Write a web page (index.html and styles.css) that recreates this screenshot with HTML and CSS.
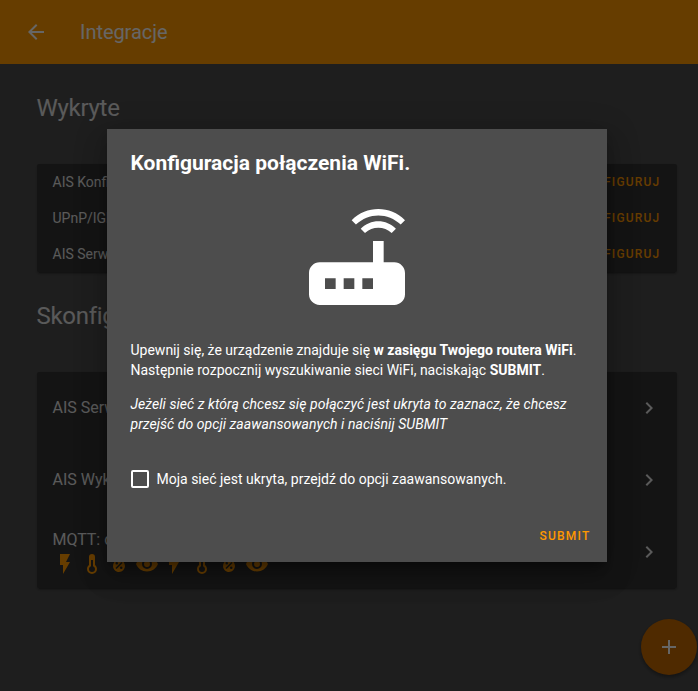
FILE: index.html
```html
<!DOCTYPE html>
<html lang="pl">
<head>
<meta charset="utf-8">
<title>Integracje</title>
<link rel="stylesheet" href="styles.css">
</head>
<body>
<svg class="defs" width="0" height="0">
  <symbol id="flash" viewBox="0 0 24 24"><path d="M7,2V13H10V22L17,10H13L17,2H7Z"/></symbol>
  <symbol id="thermometer" viewBox="0 0 24 24"><path d="M17,17A5,5 0 0,1 12,22A5,5 0 0,1 7,17C7,15.36 7.79,13.91 9,13V5A3,3 0 0,1 12,2A3,3 0 0,1 15,5V13C16.21,13.91 17,15.36 17,17M11,8V14.17C9.83,14.58 9,15.69 9,17A3,3 0 0,0 12,20A3,3 0 0,0 15,17C15,15.69 14.17,14.58 13,14.17V8H11Z"/></symbol>
  <symbol id="humidity" viewBox="0 0 24 24"><path d="M12,3.25C12,3.25 6,10 6,14C6,17.32 8.69,20 12,20A6,6 0 0,0 18,14C18,10 12,3.25 12,3.25M14.47,9.97L15.53,11.03L9.53,17.03L8.47,15.97M9.75,10A1.25,1.25 0 0,1 11,11.25A1.25,1.25 0 0,1 9.75,12.5A1.25,1.25 0 0,1 8.5,11.25A1.25,1.25 0 0,1 9.75,10M14.25,14.5A1.25,1.25 0 0,1 15.5,15.75A1.25,1.25 0 0,1 14.25,17A1.25,1.25 0 0,1 13,15.75A1.25,1.25 0 0,1 14.25,14.5Z"/></symbol>
  <symbol id="eye" viewBox="0 0 24 24"><path d="M12,9A3,3 0 0,0 9,12A3,3 0 0,0 12,15A3,3 0 0,0 15,12A3,3 0 0,0 12,9M12,17A5,5 0 0,1 7,12A5,5 0 0,1 12,7A5,5 0 0,1 17,12A5,5 0 0,1 12,17M12,4.5C7,4.5 2.73,7.61 1,12C2.73,16.39 7,19.5 12,19.5C17,19.5 21.27,16.39 23,12C21.27,7.61 17,4.5 12,4.5Z"/></symbol>
  <symbol id="chevron" viewBox="0 0 24 24"><path d="M10 6L8.59 7.41 13.17 12l-4.58 4.59L10 18l6-6z"/></symbol>
</svg>

<header class="toolbar">
  <svg class="icon" viewBox="0 0 24 24"><path d="M20 11H7.83l5.59-5.59L12 4l-8 8 8 8 1.41-1.41L7.83 13H20v-2z"/></svg>
  <span class="toolbar-title">Integracje</span>
</header>

<main class="content">
  <h2 class="heading">Wykryte</h2>
  <section class="card">
    <div class="found"><span>AIS Konfiguracja WiFi</span><span class="action">KONFIGURUJ</span></div>
    <div class="found"><span>UPnP/IGD</span><span class="action">KONFIGURUJ</span></div>
    <div class="found"><span>AIS Serwis</span><span class="action">KONFIGURUJ</span></div>
  </section>
  <h2 class="heading">Skonfigurowane</h2>
  <section class="card">
    <div class="entry"><div>AIS Serwis</div><svg class="icon"><use href="#chevron"/></svg></div>
    <div class="entry"><div>AIS Wykrywanie</div><svg class="icon"><use href="#chevron"/></svg></div>
    <div class="entry">
      <div>
        <div class="entry-name">MQTT: configuration.yaml</div>
        <div class="entities">
          <svg class="icon"><use href="#flash"/></svg>
          <svg class="icon"><use href="#thermometer"/></svg>
          <svg class="icon"><use href="#humidity"/></svg>
          <svg class="icon"><use href="#eye"/></svg>
          <svg class="icon"><use href="#flash"/></svg>
          <svg class="icon"><use href="#thermometer"/></svg>
          <svg class="icon"><use href="#humidity"/></svg>
          <svg class="icon"><use href="#eye"/></svg>
        </div>
      </div>
      <svg class="icon"><use href="#chevron"/></svg>
    </div>
  </section>
</main>

<div class="fab"><svg class="icon" viewBox="0 0 24 24"><path d="M19 13h-6v6h-2v-6H5v-2h6V5h2v6h6v2z"/></svg></div>

<div class="backdrop">
  <div class="dialog">
    <h1 class="dialog-title">Konfiguracja połączenia WiFi.</h1>
    <svg class="router" viewBox="0 0 24 24"><path d="M20.2 5.9l.8-.8C19.6 3.7 17.8 3 16 3s-3.6.7-5 2.1l.8.8C13 4.8 14.5 4.2 16 4.2s3 .6 4.2 1.7zm-.9.8c-.9-.9-2.1-1.4-3.3-1.4s-2.4.5-3.3 1.4l.8.8c.7-.7 1.6-1 2.5-1 .9 0 1.8.3 2.5 1l.8-.8zM19 13h-2V9h-2v4H5c-1.1 0-2 .9-2 2v4c0 1.1.9 2 2 2h14c1.1 0 2-.9 2-2v-4c0-1.1-.9-2-2-2zM8 18H6v-2h2v2zm3.5 0h-2v-2h2v2zm3.5 0h-2v-2h2v2z"/></svg>
    <p class="text">Upewnij się, że urządzenie znajduje się <b>w zasięgu Twojego routera WiFi</b>.<br>Następnie rozpocznij wyszukiwanie sieci WiFi, naciskając <b>SUBMIT</b>.</p>
    <p class="text"><em>Jeżeli sieć z którą chcesz się połączyć jest ukryta to zaznacz, że chcesz<br>przejść do opcji zaawansowanych i naciśnij SUBMIT</em></p>
    <div class="check"><span class="box"></span><span>Moja sieć jest ukryta, przejdź do opcji zaawansowanych.</span></div>
    <div class="buttons"><span class="action">SUBMIT</span></div>
  </div>
</div>
</body>
</html>
```
FILE: styles.css
```css
* { box-sizing: border-box; }
body {
  margin: 0;
  height: 691px;
  overflow: hidden;
  background: #4d4d4d;
  color: #e1e1e1;
  font: 14px/20px Roboto, "Noto Sans", sans-serif;
}
.defs { position: absolute; }
.icon { width: 24px; height: 24px; fill: currentColor; flex: none; }
.toolbar {
  display: flex;
  align-items: center;
  gap: 32px;
  height: 64px;
  padding: 0 24px;
  background: #ff9800;
  color: #fff;
}
.toolbar-title { font-size: 20px; letter-spacing: -.05px; }
.content { width: 640px; margin-left: 36.5px; }
.heading {
  margin: 0;
  height: 100px;
  padding-top: 28px;
  font-size: 24px;
  font-weight: 400;
  line-height: 32px;
  letter-spacing: -.012em;
  white-space: nowrap;
}
.card {
  background: #323232;
  border-radius: 2px;
  box-shadow: 0 2px 2px rgba(0,0,0,.14), 0 1px 5px rgba(0,0,0,.12), 0 3px 1px -2px rgba(0,0,0,.2);
}
.found {
  display: flex;
  justify-content: space-between;
  align-items: center;
  height: 36px;
  padding: 0 16px;
}
.action {
  color: #ff9800;
  font-size: 12px;
  font-weight: 500;
  letter-spacing: 1.2px;
}
.entry {
  display: flex;
  justify-content: space-between;
  align-items: center;
  height: 72px;
  padding: 0 16px;
  font-size: 16px;
}
.entry-name { line-height: 24px; }
.entities { display: flex; gap: 3.47px; color: #ff9800; }
.fab {
  position: absolute;
  left: 641px;
  top: 619px;
  width: 56px;
  height: 56px;
  display: grid;
  place-items: center;
  border-radius: 50%;
  background: #c66900;
  color: #fff;
  box-shadow: 0 2px 4px rgba(0,0,0,.4);
}
.backdrop {
  position: absolute;
  inset: 0;
  padding: 129px 0 0 106.5px;
  background: rgba(0,0,0,.6);
}
.dialog {
  display: flex;
  flex-direction: column;
  width: 500px;
  height: 433px;
  padding: 20px 16px 16px 24px;
  background: #4d4d4d;
  color: #fff;
  box-shadow: 0 16px 24px 2px rgba(0,0,0,.14), 0 6px 30px 5px rgba(0,0,0,.12), 0 8px 10px -5px rgba(0,0,0,.4);
}
.dialog-title { margin: 0; font-size: 21px; line-height: 28px; font-weight: 700; }
.router { width: 128px; height: 128px; margin: 16px 0 19px 162px; fill: #fff; }
.text { margin: 0 0 14px; white-space: nowrap; }
.text em { letter-spacing: .05px; }
.check { display: flex; align-items: center; gap: 8px; margin-top: 21px; height: 20px; }
.box { width: 18px; height: 18px; border: 2px solid #fff; border-radius: 2px; }
.buttons { margin-top: auto; text-align: right; }
```
